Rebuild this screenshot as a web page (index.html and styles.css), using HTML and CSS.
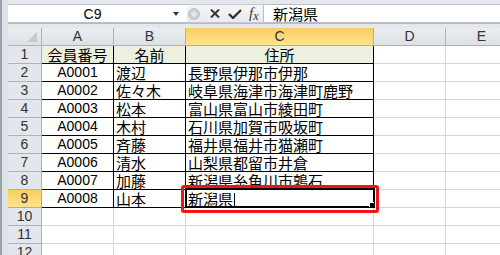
FILE: index.html
```html
<!DOCTYPE html>
<html lang="ja">
<head>
  <meta charset="UTF-8">
  <title>会員名簿</title>
  <link rel="stylesheet" href="styles.css">
</head>
<body>

  <div class="window">
    <div class="formula-bar">
      <div class="name-box">
        <span class="name">C9</span>
        <span class="drop"></span>
      </div>
      <div class="fx-tools">
        <span class="splitter"></span>
        <svg class="icon" width="10" height="9" viewBox="0 0 10 9">
          <path d="M1 0.5 L9 8.5 M9 0.5 L1 8.5" stroke="#333" stroke-width="2" fill="none"/>
        </svg>
        <svg class="icon" width="14" height="10" viewBox="0 0 14 10">
          <path d="M1 5 L5 9 L13 1" stroke="#333" stroke-width="2.4" fill="none"/>
        </svg>
        <span class="fx">f<span class="fx-x">x</span></span>
      </div>
      <div class="formula-input">新潟県</div>
    </div>

    <div class="sheet">
      <!-- column headers -->
      <div class="hdr corner"><span class="corner-mark"></span></div>
      <div class="hdr">A</div>
      <div class="hdr">B</div>
      <div class="hdr sel">C</div>
      <div class="hdr">D</div>
      <div class="hdr">E</div>

      <div class="hdr row">1</div>
      <div class="cell head dk center">会員番号</div>
      <div class="cell head dk center">名前</div>
      <div class="cell head dk center">住所</div>
      <div class="cell"></div>
      <div class="cell"></div>

      <div class="hdr row">2</div>
      <div class="cell dk id">A0001</div>
      <div class="cell dk">渡辺</div>
      <div class="cell dk">長野県伊那市伊那</div>
      <div class="cell"></div>
      <div class="cell"></div>

      <div class="hdr row">3</div>
      <div class="cell dk id">A0002</div>
      <div class="cell dk">佐々木</div>
      <div class="cell dk">岐阜県海津市海津町鹿野</div>
      <div class="cell"></div>
      <div class="cell"></div>

      <div class="hdr row">4</div>
      <div class="cell dk id">A0003</div>
      <div class="cell dk">松本</div>
      <div class="cell dk">富山県富山市綾田町</div>
      <div class="cell"></div>
      <div class="cell"></div>

      <div class="hdr row">5</div>
      <div class="cell dk id">A0004</div>
      <div class="cell dk">木村</div>
      <div class="cell dk">石川県加賀市吸坂町</div>
      <div class="cell"></div>
      <div class="cell"></div>

      <div class="hdr row">6</div>
      <div class="cell dk id">A0005</div>
      <div class="cell dk">斉藤</div>
      <div class="cell dk">福井県福井市猫瀬町</div>
      <div class="cell"></div>
      <div class="cell"></div>

      <div class="hdr row">7</div>
      <div class="cell dk id">A0006</div>
      <div class="cell dk">清水</div>
      <div class="cell dk">山梨県都留市井倉</div>
      <div class="cell"></div>
      <div class="cell"></div>

      <div class="hdr row">8</div>
      <div class="cell dk id">A0007</div>
      <div class="cell dk">加藤</div>
      <div class="cell dk">新潟県糸魚川市鶉石</div>
      <div class="cell"></div>
      <div class="cell"></div>

      <div class="hdr row sel">9</div>
      <div class="cell dk id">A0008</div>
      <div class="cell dk">山本</div>
      <div class="cell dk active">新潟県<span class="caret"></span><span class="fill-handle"></span></div>
      <div class="cell"></div>
      <div class="cell"></div>

      <div class="hdr row">10</div>
      <div class="cell"></div>
      <div class="cell"></div>
      <div class="cell"></div>
      <div class="cell"></div>
      <div class="cell"></div>

      <div class="hdr row">11</div>
      <div class="cell"></div>
      <div class="cell"></div>
      <div class="cell"></div>
      <div class="cell"></div>
      <div class="cell"></div>

      <div class="hdr row">12</div>
      <div class="cell"></div>
      <div class="cell"></div>
      <div class="cell"></div>
      <div class="cell"></div>
      <div class="cell"></div>

      <!-- red highlight round the edited cell -->
      <div class="callout"></div>
    </div>
  </div>

</body>
</html>
```

FILE: styles.css
```css
body {
  margin: 0;
  width: 500px;
  height: 255px;
  overflow: hidden;
  font-family: "Liberation Sans", "Noto Sans CJK JP", sans-serif;
  color: #000;
}

.window {
  height: 255px;
  box-sizing: border-box;
  border-left: 2px solid #9aa2ac;
  padding-left: 6px;
  background: #dfe3e8;
}

/* formula bar */

.formula-bar {
  display: flex;
  height: 28px;
  box-sizing: border-box;
  padding-top: 4px;
  background: linear-gradient(to bottom, #e4e8ec 0 23px, #b4bbc4 23px 24px, #e4e8ec 24px);
}

.name-box {
  width: 179px;
  height: 19px;
  box-sizing: border-box;
  display: flex;
  align-items: center;
  background: #fff;
  border-top: 1px solid #b8bec6;
  border-bottom: 1px solid #b8bec6;
}

.name {
  flex: 1;
  text-align: center;
  font-size: 14px;
  padding-left: 4px;
}

.drop {
  width: 0;
  height: 0;
  border-left: 3px solid transparent;
  border-right: 3px solid transparent;
  border-top: 4px solid #333;
  margin-right: 8px;
}

.fx-tools {
  width: 76px;
  height: 19px;
  box-sizing: border-box;
  display: flex;
  align-items: center;
  background: linear-gradient(to bottom, #f6f6f6, #eaeaea);
  border-top: 1px solid #c4c9cf;
  border-bottom: 1px solid #c4c9cf;
}

.splitter {
  width: 12px;
  height: 12px;
  margin-left: 1px;
  border-radius: 50%;
  border: 1px solid #b9bec5;
  background: radial-gradient(circle, #e6e7e9 0 2px, #cdd0d4 3px);
  box-sizing: border-box;
}

.icon {
  display: block;
}

.fx-tools .icon:first-of-type {
  margin-left: 10px;
}

.fx-tools .icon + .icon {
  margin-left: 8px;
}

.fx {
  margin-left: 7px;
  font-family: "Liberation Serif", serif;
  font-style: italic;
  font-size: 15px;
  color: #333;
  line-height: 1;
}

.fx-x {
  font-size: 12px;
  position: relative;
  top: 2px;
}

.formula-input {
  flex: 1;
  height: 19px;
  box-sizing: border-box;
  background: #fff;
  border: 1px solid #b8bec6;
  border-right: none;
  padding-left: 9px;
  font-family: "Noto Sans CJK JP", sans-serif;
  font-size: 15px;
  line-height: 17px;
}

/* sheet */

.sheet {
  position: relative;
  display: grid;
  grid-template-columns: 34px 72px 72px 188px 72px 72px;
  grid-auto-rows: 18px;
  background: #fff;
}

.hdr,
.cell {
  box-sizing: border-box;
  border-right: 1px solid #d6d6d6;
  border-bottom: 1px solid #d6d6d6;
  line-height: 17px;
  white-space: nowrap;
  overflow: hidden;
}

.hdr {
  background: linear-gradient(to bottom, #e9ecf0, #dde1e6);
  border-color: #abb2bb;
  text-align: center;
  font-size: 14px;
  color: #333;
}

.hdr.row {
  background: #e3e6ea;
}

.hdr.sel {
  background: linear-gradient(to bottom, #f8cd5e, #ffe390);
  border-color: #e3a63b;
}

.corner {
  position: relative;
}

.corner-mark {
  position: absolute;
  right: 4px;
  bottom: 3px;
  width: 0;
  height: 0;
  border-left: 10px solid transparent;
  border-bottom: 10px solid #c3c8ce;
}

.cell {
  font-family: "Noto Sans CJK JP", sans-serif;
  font-size: 15px;
  padding-left: 2px;
}

.cell.dk {
  border-right-color: #000;
  border-bottom-color: #000;
}

.cell.head {
  background: #ebf1de;
}

.center {
  text-align: center;
  padding-left: 0;
}

.cell.id {
  font-family: "Liberation Sans", sans-serif;
  font-size: 14px;
  text-align: center;
  padding-left: 0;
}

.active {
  position: relative;
  overflow: visible;
  z-index: 1;
}

.active::after {
  content: "";
  position: absolute;
  left: -1px;
  top: -2px;
  right: -2px;
  bottom: -1px;
  border: 2px solid #000;
}

.caret {
  display: inline-block;
  width: 1px;
  height: 14px;
  margin-left: 1px;
  background: #000;
  vertical-align: -2px;
}

.fill-handle {
  position: absolute;
  right: -2px;
  bottom: -1px;
  width: 5px;
  height: 5px;
  background: #000;
  box-shadow: -1px -1px 0 #fff;
  z-index: 2;
}

.callout {
  position: absolute;
  left: 173px;
  top: 157px;
  width: 198px;
  height: 28px;
  box-sizing: border-box;
  border: 3px solid #f01414;
  border-radius: 3px;
  z-index: 3;
}
```
